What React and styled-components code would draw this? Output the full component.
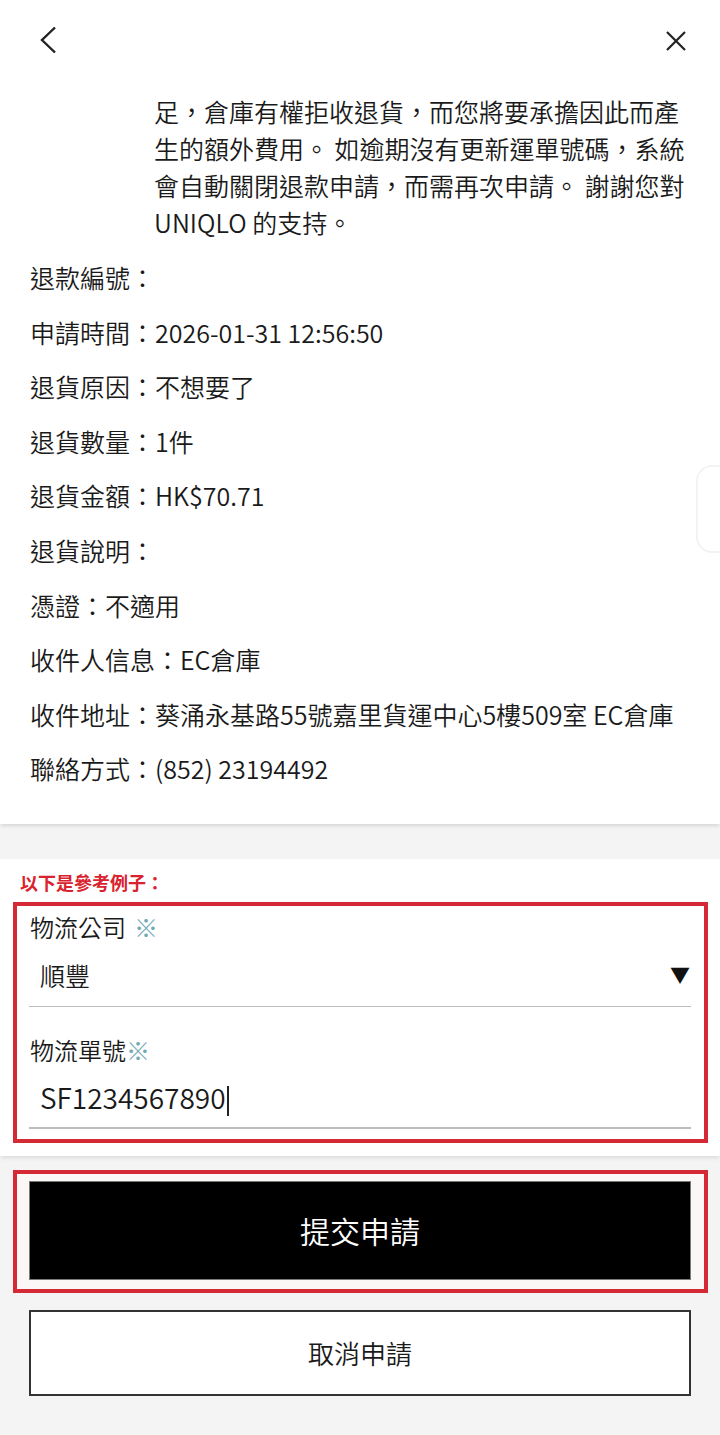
import React from "react";
import styled, { createGlobalStyle } from "styled-components";

const GlobalStyle = createGlobalStyle`
  html, body {
    margin: 0;
    padding: 0;
    background: #f4f4f4;
  }
  body {
    font-family: "Noto Sans CJK TC", "Noto Sans", sans-serif;
    font-weight: 350;
    color: #1a1a1a;
  }
  * {
    box-sizing: border-box;
  }
`;

const StyledPage = styled.div`
  position: relative;
  width: 720px;
  min-height: 1435px;
  background: #f4f4f4;
  overflow: hidden;
`;

const StyledHeader = styled.header`
  display: flex;
  align-items: flex-start;
  justify-content: space-between;
  height: 80px;
  padding: 26px 33px 0 39px;
`;

const StyledIconButton = styled.button`
  display: flex;
  padding: 0;
  border: 0;
  background: none;
  cursor: pointer;
  color: #222;
`;

const StyledCard = styled.section`
  background: #fff;
  padding-bottom: 28px;
  box-shadow: 0 3px 4px -1px rgba(0, 0, 0, 0.13);
`;

const StyledNotice = styled.p`
  margin: 13px 0 9px 154px;
  font-size: 25px;
  line-height: 37px;
`;

const StyledRow = styled.div`
  display: flex;
  padding-left: 30px;
  font-size: 25px;
  line-height: 54.6px;
  white-space: nowrap;
`;

const StyledSideTab = styled.div`
  position: absolute;
  right: -16px;
  top: 465px;
  width: 40px;
  height: 88px;
  border: 2px solid #f3f3f3;
  border-radius: 16px;
  background: #fff;
`;

const StyledFormSection = styled.section`
  margin-top: 35px;
  padding: 10px 12px 13px 13px;
  background: #fff;
  box-shadow: 0 3px 4px -1px rgba(0, 0, 0, 0.1);
`;

const StyledHint = styled.p`
  margin: 0 0 7px 7px;
  color: #d9232e;
  font-size: 18px;
  font-weight: 700;
  line-height: 26px;
`;

const StyledRedFrame = styled.div`
  border: 4px solid #d32a35;
  padding: ${(p) => p.$padding};
  background: ${(p) => p.$bg || "#fff"};
`;

const StyledField = styled.div`
  margin-top: ${(p) => p.$gap}px;
`;

const StyledLabel = styled.div`
  padding-left: 1px;
  font-size: 24px;
  line-height: 34px;
`;

const StyledMark = styled.span`
  color: #72a9b6;
  margin-left: ${(p) => (p.$spaced ? "8px" : "0")};
`;

const StyledInputRow = styled.div`
  display: flex;
  align-items: center;
  justify-content: space-between;
  height: ${(p) => p.$height}px;
  padding: 0 0 0 11px;
  font-size: ${(p) => p.$size}px;
  border-bottom: ${(p) => p.$line}px solid #bcbcbc;
`;

const StyledCaret = styled.span`
  display: inline-block;
  width: 2px;
  height: 30px;
  margin-left: 1px;
  vertical-align: middle;
  background: #222;
`;

const StyledArrow = styled.span`
  font-size: 20px;
  line-height: 1;
  margin-right: 1px;
  color: #111;
`;

const StyledActions = styled.div`
  padding: 14px 12px 0 13px;
`;

const StyledSubmit = styled.button`
  display: block;
  width: 100%;
  height: 99px;
  border: 1px solid #7a7a7a;
  background: #000;
  color: #fff;
  font-family: inherit;
  font-weight: 350;
  font-size: 30px;
  cursor: pointer;
`;

const StyledCancel = styled.button`
  display: block;
  width: 662px;
  height: 86px;
  margin: 17px 0 0 16px;
  border: 2px solid #333;
  background: #fff;
  color: #1a1a1a;
  font-family: inherit;
  font-weight: 350;
  font-size: 26px;
  cursor: pointer;
`;

const rows = [
  ["退款編號：", ""],
  ["申請時間：", "2026-01-31 12:56:50"],
  ["退貨原因：", "不想要了"],
  ["退貨數量：", "1件"],
  ["退貨金額：", "HK$70.71"],
  ["退貨說明：", ""],
  ["憑證：", "不適用"],
  ["收件人信息：", "EC倉庫"],
  ["收件地址：", "葵涌永基路55號嘉里貨運中心5樓509室 EC倉庫"],
  ["聯絡方式：", "(852) 23194492"],
];

const App = () => {
  return (
    <StyledPage>
      <GlobalStyle />
      <StyledCard>
        <StyledHeader>
          <StyledIconButton aria-label="返回">
            <svg width="20" height="28" viewBox="0 0 20 28">
              <polyline points="16,1.5 3,14 16,26.5" fill="none" stroke="currentColor" strokeWidth="2.4" />
            </svg>
          </StyledIconButton>
          <StyledIconButton aria-label="關閉">
            <svg width="22" height="22" viewBox="0 0 22 22" style={{ marginTop: 4 }}>
              <path d="M2 2 L20 20 M20 2 L2 20" stroke="currentColor" strokeWidth="2.2" />
            </svg>
          </StyledIconButton>
        </StyledHeader>
        <StyledNotice>
          足，倉庫有權拒收退貨，而您將要承擔因此而產
          <br />
          生的額外費用。 如逾期沒有更新運單號碼，系統
          <br />
          會自動關閉退款申請，而需再次申請。 謝謝您對
          <br />
          UNIQLO 的支持。
        </StyledNotice>
        {rows.map(([label, value]) => (
          <StyledRow key={label}>
            <span>{label}</span>
            <span>{value}</span>
          </StyledRow>
        ))}
      </StyledCard>
      <StyledSideTab />

      <StyledFormSection>
        <StyledHint>以下是參考例子：</StyledHint>
        <StyledRedFrame $padding="0 13px 10px 12px">
          <StyledField $gap={4}>
            <StyledLabel>
              物流公司<StyledMark $spaced>※</StyledMark>
            </StyledLabel>
            <StyledInputRow $height={63} $size={25} $line={1.5}>
              <span>順豐</span>
              <StyledArrow>▼</StyledArrow>
            </StyledInputRow>
          </StyledField>
          <StyledField $gap={26}>
            <StyledLabel>
              物流單號<StyledMark>※</StyledMark>
            </StyledLabel>
            <StyledInputRow $height={62} $size={28} $line={2}>
              <span>
                SF1234567890
                <StyledCaret />
              </span>
            </StyledInputRow>
          </StyledField>
        </StyledRedFrame>
      </StyledFormSection>

      <StyledActions>
        <StyledRedFrame $padding="7px 13px 9px 12px" $bg="#fbf7f7">
          <StyledSubmit>提交申請</StyledSubmit>
        </StyledRedFrame>
        <StyledCancel>取消申請</StyledCancel>
      </StyledActions>
    </StyledPage>
  );
};

export default App;
